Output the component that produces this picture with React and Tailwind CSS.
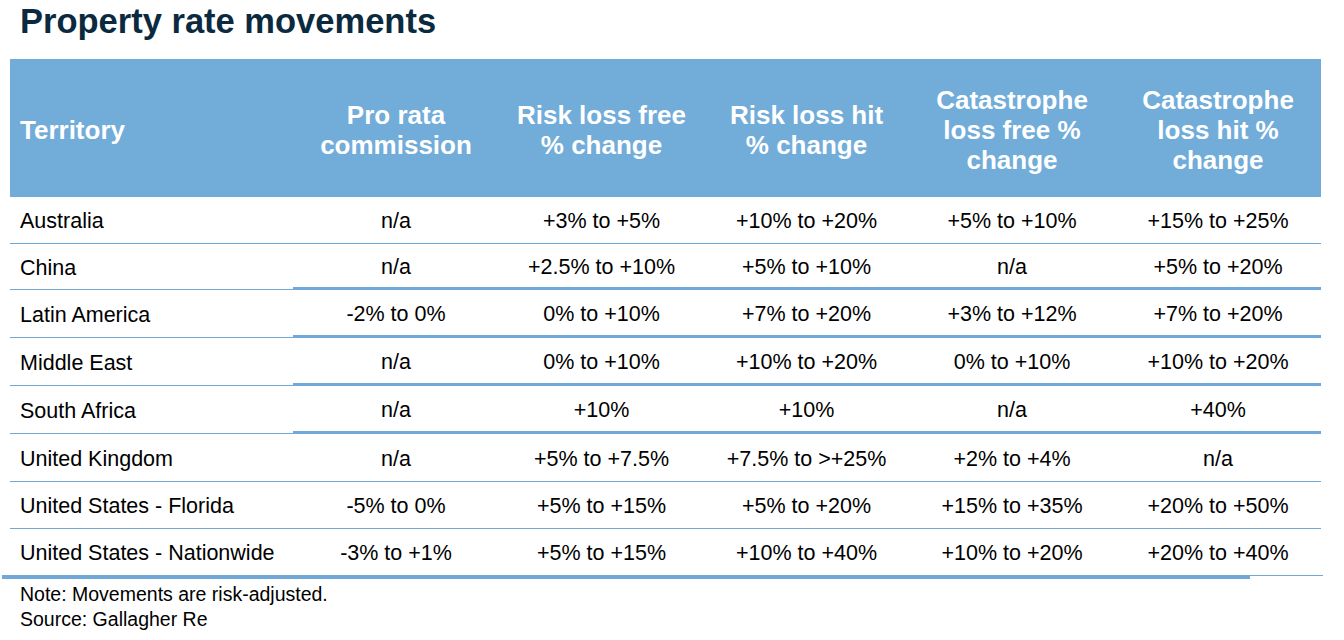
const rows = [
  { name: "Australia", h: "h-[47px]", line: "thin", cells: ["n/a", "+3% to +5%", "+10% to +20%", "+5% to +10%", "+15% to +25%"] },
  { name: "China", h: "h-[46px]", line: "thick", cells: ["n/a", "+2.5% to +10%", "+5% to +10%", "n/a", "+5% to +20%"] },
  { name: "Latin America", h: "h-[48px]", line: "thick", cells: ["-2% to 0%", "0% to +10%", "+7% to +20%", "+3% to +12%", "+7% to +20%"] },
  { name: "Middle East", h: "h-[48px]", line: "thick", cells: ["n/a", "0% to +10%", "+10% to +20%", "0% to +10%", "+10% to +20%"] },
  { name: "South Africa", h: "h-[48px]", line: "thick", cells: ["n/a", "+10%", "+10%", "n/a", "+40%"] },
  { name: "United Kingdom", h: "h-[48px]", line: "thin", cells: ["n/a", "+5% to +7.5%", "+7.5% to >+25%", "+2% to +4%", "n/a"] },
  { name: "United States - Florida", h: "h-[47px]", line: "thin", cells: ["-5% to 0%", "+5% to +15%", "+5% to +20%", "+15% to +35%", "+20% to +50%"] },
  { name: "United States - Nationwide", h: "h-[46px]", line: "none", cells: ["-3% to +1%", "+5% to +15%", "+10% to +40%", "+10% to +20%", "+20% to +40%"] },
];

const headers = [
  ["Pro rata", "commission"],
  ["Risk loss free", "% change"],
  ["Risk loss hit", "% change"],
  ["Catastrophe", "loss free %", "change"],
  ["Catastrophe", "loss hit %", "change"],
];

const cols = "grid grid-cols-[283px_206px_205px_205px_206px_206px]";

function lineClass(line, first) {
  if (line === "none") return "";
  if (line === "thin") return "border-b border-b-[#6fa8d9]";
  return first ? "border-b border-b-[#6fa8d9]" : "border-b-[3px] border-b-[#6fa8d9]";
}

export default function App() {
  return (
    <div className="w-[1344px] h-[640px] bg-white overflow-hidden font-['Liberation_Sans',Arial,sans-serif] text-black">
      <div className="h-[59px] pl-[20px] pt-[1px]">
        <h1 className="text-[34.5px] leading-[40px] font-bold text-[#0b2a40]">Property rate movements</h1>
      </div>

      <div className="ml-[10px] w-[1311px]">
        <div className={`${cols} h-[138px] pt-[4px] bg-[#72acd9] text-white font-bold text-[26px] leading-[30px]`}>
          <div className="flex items-center pl-[10px]">Territory</div>
          {headers.map((h, i) => (
            <div key={i} className="flex flex-col items-center justify-center text-center">
              {h.map((l) => (
                <span key={l}>{l}</span>
              ))}
            </div>
          ))}
        </div>

        {rows.map((r) => (
          <div key={r.name} className={`${cols} ${r.h} text-[21.5px]`}>
            <div className={`flex items-center pl-[10px] pt-[3px] ${lineClass(r.line, true)}`}>{r.name}</div>
            {r.cells.map((c, i) => (
              <div key={i} className={`flex items-center justify-center pt-[3px] ${lineClass(r.line, false)}`}>
                {c}
              </div>
            ))}
          </div>
        ))}
      </div>

      <div className="flex items-start ml-[2px]">
        <div className="w-[1248px] h-[4px] bg-[#6fa8d9]" />
        <div className="w-[73px] h-px bg-[#6fa8d9]" />
      </div>

      <div className="pl-[20px] pt-[3px] text-[19.5px] leading-[25px]">
        <p>Note: Movements are risk-adjusted.</p>
        <p>Source: Gallagher Re</p>
      </div>
    </div>
  );
}
